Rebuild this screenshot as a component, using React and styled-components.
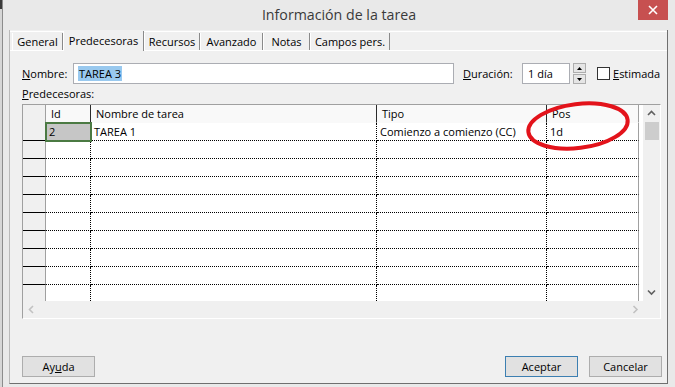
import React from "react";
import styled, { createGlobalStyle } from "styled-components";

const GlobalStyle = createGlobalStyle`
  html, body {
    margin: 0;
    padding: 0;
  }
  body {
    width: 675px;
    height: 387px;
    overflow: hidden;
    background: linear-gradient(#3b3b3b 0 9px, #d6d6d6 9px);
    font-family: "Open Sans", "Noto Sans", Arial, sans-serif;
    font-size: 11px;
    color: #000;
  }
  * { box-sizing: border-box; }
`;

const Window = styled.div`
  margin-left: 2px;
  width: 673px;
  height: 387px;
  border-left: 1px solid #8c8c8c;
  background: #e9e9e9;
  display: flex;
  flex-direction: column;
`;

const TitleBar = styled.div`
  height: 30px;
  flex-shrink: 0;
  display: grid;
  grid-template-columns: 1fr auto 1fr;
  align-items: start;
`;

const Title = styled.div`
  grid-column: 2;
  font-size: 14.2px;
  line-height: 30px;
  color: #3a3a3a;
`;

const CloseButton = styled.div`
  grid-column: 3;
  justify-self: end;
  margin-right: 7px;
  width: 30px;
  height: 20px;
  background: #c75050;
  display: flex;
  align-items: center;
  justify-content: center;
`;

const Frame = styled.div`
  flex: 1;
  display: flex;
  min-width: 0;
  padding: 0 7px 3px 6px;
`;

const Dialog = styled.div`
  flex: 1;
  min-width: 0;
  display: flex;
  flex-direction: column;
  background: #f0f0f0;
  border: 1px solid #b9b9b9;
  border-top: none;
  border-right-color: #6f6f6f;
  border-bottom-color: #6f6f6f;
`;

const TabBar = styled.div`
  margin-top: 1px;
  border-top: 1px solid #fff;
  height: 19px;
  display: flex;
  align-items: flex-end;
  padding-left: 2px;
`;

const Tab = styled.div`
  width: ${(p) => p.$w}px;
  height: ${(p) => (p.$active ? 20 : 17)}px;
  margin-bottom: ${(p) => (p.$active ? -1 : 0)}px;
  padding-bottom: ${(p) => (p.$active ? 2 : 0)}px;
  display: flex;
  align-items: center;
  justify-content: center;
  background: #f0f0f0;
  border-left: 1px solid #fff;
  border-right: 1px solid #8a8a8a;
  position: relative;
  z-index: ${(p) => (p.$active ? 1 : 0)};
  white-space: nowrap;
`;

const Page = styled.div`
  flex: 1;
  border-top: 1px solid #fff;
  padding: 12px 0 0 12px;
  display: flex;
  flex-direction: column;
`;

const FieldRow = styled.div`
  height: 21px;
  display: flex;
  align-items: center;
`;

const Label = styled.label`
  width: ${(p) => (p.$w ? `${p.$w}px` : "auto")};
  margin-left: ${(p) => p.$ml || 0}px;
  flex-shrink: 0;
  white-space: nowrap;
`;

const TextBox = styled.div`
  width: ${(p) => p.$w}px;
  height: 21px;
  border: 1px solid #abadb3;
  background: #fff;
  padding-left: ${(p) => p.$pl}px;
  display: flex;
  align-items: center;
  white-space: nowrap;
`;

const Selected = styled.span`
  display: inline-block;
  line-height: 15px;
  background: #99c9ef;
  padding: 0 1px;
`;

const Spin = styled.div`
  margin-left: 3px;
  width: 13px;
  height: 21px;
  display: flex;
  flex-direction: column;
  gap: 1px;
`;

const SpinHalf = styled.div`
  flex: 1;
  background: #e5e5e5;
  border: 1px solid #adadad;
  display: flex;
  align-items: center;
  justify-content: center;
`;

const Check = styled.div`
  margin-left: 11px;
  width: 13px;
  height: 13px;
  border: 1px solid #333;
  background: #fff;
  flex-shrink: 0;
`;

const SectionLabel = styled.div`
  margin-top: 2px;
  line-height: 16px;
`;

const Grid = styled.div`
  position: relative;
  margin-top: 2px;
  width: 639px;
  height: 215px;
  display: flex;
  border: 1px solid #a0a0a0;
  border-right-color: #fff;
  border-bottom-color: #fff;
`;

const GridMain = styled.div`
  width: 620px;
  display: flex;
  flex-direction: column;
`;

const Sheet = styled.div`
  height: 196px;
  overflow: hidden;
  background: #fff;
`;

const Row = styled.div`
  display: grid;
  grid-template-columns: 23px 45px 286px 170px 92px;
  height: 18px;
`;

const Cell = styled.div`
  height: 18px;
  padding-left: ${(p) => (p.$head ? 5 : 3)}px;
  line-height: 17px;
  white-space: nowrap;
  overflow: hidden;
  background: ${(p) => (p.$head ? "#f9f9f9" : "#fff")};
  border-right: 1px ${(p) => (p.$last ? "solid #a0a0a0" : p.$head ? "solid #2b2b2b" : "dotted #000")};
  border-bottom: 1px ${(p) => (p.$head ? "solid #f9f9f9" : "dotted #000")};
  ${(p) =>
    p.$selected &&
    `
    background: #c6c6c6;
    outline: 2px solid #4b7a43;
    outline-offset: -1px;
    position: relative;
  `}
`;

const RowHead = styled.div`
  height: 18px;
  background: #f0f0f0;
  border-right: 1px solid #a0a0a0;
  border-bottom: 1px solid ${(p) => (p.$corner ? "#f0f0f0" : "#000")};
`;

const HScroll = styled.div`
  height: 17px;
  background: #f0f0f0;
  display: flex;
  align-items: center;
  justify-content: space-between;
  padding: 0 4px 0 5px;
`;

const VScroll = styled.div`
  width: 17px;
  display: flex;
  flex-direction: column;
  background: #f0f0f0;
`;

const ScrollButton = styled.div`
  height: 17px;
  display: flex;
  align-items: center;
  justify-content: center;
`;

const Thumb = styled.div`
  height: 18px;
  margin: 0 1px 0 2px;
  background: #cdcdcd;
`;

const Spacer = styled.div`
  flex: 1;
`;

const Annotation = styled.svg`
  position: absolute;
  left: 0;
  top: 0;
  overflow: visible;
  pointer-events: none;
`;

const Footer = styled.div`
  display: flex;
  gap: 11px;
  padding: 0 5px 6px 12px;
`;

const Button = styled.div`
  width: 73px;
  height: 21px;
  margin-right: ${(p) => (p.$push ? "auto" : 0)};
  background: #e1e1e1;
  border: 1px solid ${(p) => (p.$default ? "#3c7fb1" : "#adadad")};
  display: flex;
  align-items: center;
  justify-content: center;
`;

const Chevron = ({ dir, color }) => {
  const pts = {
    up: "1,5 4.5,1.5 8,5",
    down: "1,1.5 4.5,5 8,1.5",
    left: "5,1 1.5,4.5 5,8",
    right: "1.5,1 5,4.5 1.5,8",
  }[dir];
  const vertical = dir === "up" || dir === "down";
  return (
    <svg width={vertical ? 9 : 7} height={vertical ? 7 : 9}>
      <polyline points={pts} fill="none" stroke={color} strokeWidth="1.6" />
    </svg>
  );
};

const rows = [
  { id: "2", name: "TAREA 1", type: "Comienzo a comienzo (CC)", pos: "1d", selected: true },
  ...Array.from({ length: 9 }, () => ({ id: "", name: "", type: "", pos: "" })),
];

const tabs = [
  { label: "General", w: 51 },
  { label: "Predecesoras", w: 81, active: true },
  { label: "Recursos", w: 56 },
  { label: "Avanzado", w: 63 },
  { label: "Notas", w: 47 },
  { label: "Campos pers.", w: 80 },
];

export default function App() {
  return (
    <>
      <GlobalStyle />
      <Window>
        <TitleBar>
          <Title>Información de la tarea</Title>
          <CloseButton>
            <svg width="10" height="10">
              <path d="M1 1 L9 9 M9 1 L1 9" stroke="#fff" strokeWidth="1.6" />
            </svg>
          </CloseButton>
        </TitleBar>
        <Frame>
          <Dialog>
            <TabBar>
              {tabs.map((t) => (
                <Tab key={t.label} $w={t.w} $active={t.active}>
                  {t.label}
                </Tab>
              ))}
            </TabBar>
            <Page>
              <FieldRow>
                <Label $w={51}>
                  <u>N</u>ombre:
                </Label>
                <TextBox $w={381} $pl={4}>
                  <Selected>TAREA 3</Selected>
                </TextBox>
                <Label $w={59} $ml={9}>
                  <u>D</u>uración:
                </Label>
                <TextBox $w={48} $pl={5}>
                  1 día
                </TextBox>
                <Spin>
                  <SpinHalf>
                    <svg width="5" height="3">
                      <path d="M0 3 L2.5 0 L5 3 Z" fill="#000" />
                    </svg>
                  </SpinHalf>
                  <SpinHalf>
                    <svg width="5" height="3">
                      <path d="M0 0 L2.5 3 L5 0 Z" fill="#000" />
                    </svg>
                  </SpinHalf>
                </Spin>
                <Check />
                <Label $ml={3}>
                  <u>E</u>stimada
                </Label>
              </FieldRow>
              <SectionLabel>
                <u>P</u>redecesoras:
              </SectionLabel>
              <Grid>
                <GridMain>
                  <Sheet>
                    <Row>
                      <RowHead $corner />
                      <Cell $head>Id</Cell>
                      <Cell $head>Nombre de tarea</Cell>
                      <Cell $head>Tipo</Cell>
                      <Cell $head $last>
                        Pos
                      </Cell>
                    </Row>
                    {rows.map((r, i) => (
                      <Row key={i}>
                        <RowHead />
                        <Cell $selected={r.selected}>{r.id}</Cell>
                        <Cell>{r.name}</Cell>
                        <Cell>{r.type}</Cell>
                        <Cell $last>{r.pos}</Cell>
                      </Row>
                    ))}
                  </Sheet>
                  <HScroll>
                    <Chevron dir="left" color="#c2c2c2" />
                    <Chevron dir="right" color="#c2c2c2" />
                  </HScroll>
                </GridMain>
                <VScroll>
                  <ScrollButton>
                    <Chevron dir="up" color="#606060" />
                  </ScrollButton>
                  <Thumb />
                  <Spacer />
                  <ScrollButton>
                    <Chevron dir="down" color="#606060" />
                  </ScrollButton>
                  <ScrollButton />
                </VScroll>
                <Annotation width="639" height="215">
                  <ellipse
                    cx="555"
                    cy="21"
                    rx="50"
                    ry="22"
                    fill="none"
                    stroke="#e3131b"
                    strokeWidth="4"
                    transform="rotate(-7 555 21)"
                  />
                </Annotation>
              </Grid>
            </Page>
            <Footer>
              <Button $push>
                <span>
                  Ay<u>u</u>da
                </span>
              </Button>
              <Button $default>Aceptar</Button>
              <Button>Cancelar</Button>
            </Footer>
          </Dialog>
        </Frame>
      </Window>
    </>
  );
}
